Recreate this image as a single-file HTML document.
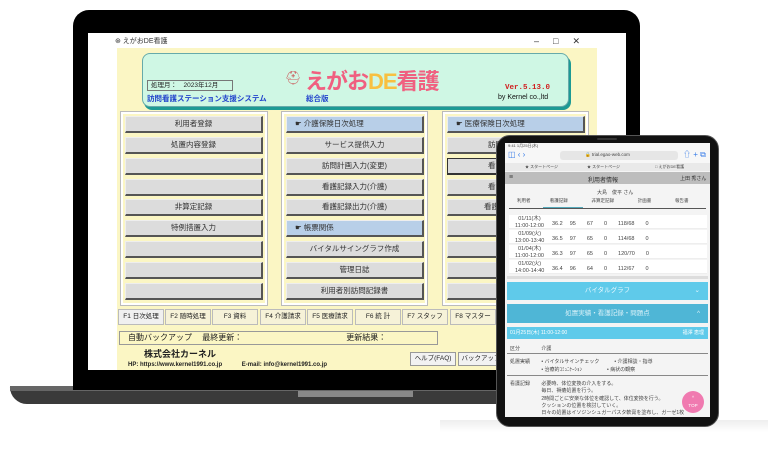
<!DOCTYPE html>
<html><head><meta charset="utf-8"><style>
*{margin:0;padding:0;box-sizing:border-box}
body{width:768px;height:458px;background:#fff;position:relative;overflow:hidden;font-family:"Liberation Sans","Noto Sans CJK JP",sans-serif;color:#222}
.a{position:absolute}
.btn{position:absolute;height:17px;background:#dcdcdc;border:1px solid #eee;border-right:2px solid #555;border-bottom:2px solid #555;font-size:7.5px;text-align:center;line-height:14px;color:#333;white-space:nowrap;overflow:hidden}
.hb{background:#b8cfe8;text-align:left;padding-left:8px}
.panel{position:absolute;top:112px;height:193px;border:2px solid #fff;outline:1px solid #bbb;background:#fbf6c4}
.tab{position:absolute;top:309px;height:16px;width:46px;background:#f6f2d8;border:1px solid #bbb;font-size:6.5px;text-align:center;line-height:14px}
.t{font-size:5.5px;color:#444;position:absolute;white-space:nowrap}
.row{position:absolute;left:509px;width:198px;height:14px;background:#fff;border-bottom:1px solid #eee}
</style></head><body>
<!-- laptop base -->
<div class="a" style="left:10px;top:386px;width:640px;height:18px;background:#3a3a3a;border-radius:2px 2px 8px 30px"></div>
<div class="a" style="left:10px;top:386px;width:640px;height:5px;background:#666"></div>
<div class="a" style="left:298px;top:391px;width:115px;height:6px;background:#888"></div>
<!-- bezel -->
<div class="a" style="left:73px;top:10px;width:567px;height:380px;background:#000;border-radius:16px 16px 0 0"></div>
<div class="a" style="left:88px;top:33px;width:538px;height:337px;background:#fff"></div>
<div class="a" style="left:115px;top:36px;font-size:7px;color:#333">⊛ えがおDE看護</div>
<div class="a" style="left:534px;top:36px;font-size:9px;color:#333;letter-spacing:14px">–□✕</div>
<div class="a" style="left:117px;top:48px;width:480px;height:322px;background:#fbf6c4"></div>
<!-- banner -->
<div class="a" style="left:142px;top:53px;width:427px;height:54px;background:#cff7e4;border-radius:8px;border:1px solid #6aa;box-shadow:2px 3px 0 #1d9a94"></div>
<div class="a" style="left:147px;top:80px;width:86px;height:11px;border:1px solid #777;font-size:6.5px;line-height:9px;padding-left:3px">処理月：　2023年12月</div>
<div class="a" style="left:147px;top:93px;font-size:7.5px;font-weight:bold;color:#2244cc">訪問看護ステーション支援システム</div>
<div class="a" style="left:306px;top:93px;font-size:7.5px;font-weight:bold;color:#2244cc">総合版</div>
<div class="a" style="left:285px;top:70px;font-size:13px;color:#c66">⛑</div>
<div class="a" style="left:305px;top:64px;font-size:22px;font-weight:bold;color:#f06080;letter-spacing:-1px">えがお<span style="color:#f8c040">DE</span>看護</div>
<div class="a" style="left:505px;top:84px;font-size:7.5px;font-weight:bold;color:#d02020;font-family:'Liberation Mono',monospace">Ver.5.13.0</div>
<div class="a" style="left:498px;top:94px;font-size:7px;color:#111">by Kernel co.,ltd</div>
<!-- panels -->
<div class="panel" style="left:121px;width:146px"></div>
<div class="panel" style="left:282px;width:145px"></div>
<div class="panel" style="left:443px;width:145px"></div>
<div class="btn" style="left:125px;top:116px;width:138px">利用者登録</div>
<div class="btn" style="left:125px;top:137px;width:138px">処置内容登録</div>
<div class="btn" style="left:125px;top:158px;width:138px"></div>
<div class="btn" style="left:125px;top:179px;width:138px"></div>
<div class="btn" style="left:125px;top:199px;width:138px">非算定記録</div>
<div class="btn" style="left:125px;top:220px;width:138px">特例措置入力</div>
<div class="btn" style="left:125px;top:241px;width:138px"></div>
<div class="btn" style="left:125px;top:262px;width:138px"></div>
<div class="btn" style="left:125px;top:283px;width:138px"></div>
<div class="btn hb" style="left:286px;top:116px;width:138px">☛ 介護保険日次処理</div>
<div class="btn" style="left:286px;top:137px;width:138px">サービス提供入力</div>
<div class="btn" style="left:286px;top:158px;width:138px">訪問計画入力(変更)</div>
<div class="btn" style="left:286px;top:179px;width:138px">看護記録入力(介護)</div>
<div class="btn" style="left:286px;top:199px;width:138px">看護記録出力(介護)</div>
<div class="btn hb" style="left:286px;top:220px;width:138px">☛ 帳票関係</div>
<div class="btn" style="left:286px;top:241px;width:138px">バイタルサイングラフ作成</div>
<div class="btn" style="left:286px;top:262px;width:138px">管理日誌</div>
<div class="btn" style="left:286px;top:283px;width:138px">利用者別訪問記録書</div>
<div class="btn hb" style="left:447px;top:116px;width:138px">☛ 医療保険日次処理</div>
<div class="btn" style="left:447px;top:137px;width:138px;text-align:left;padding-left:40px">訪問</div>
<div class="btn" style="left:447px;top:158px;width:138px;text-align:left;padding-left:40px;border-color:#333">看護</div>
<div class="btn" style="left:447px;top:179px;width:138px;text-align:left;padding-left:40px">看護</div>
<div class="btn" style="left:447px;top:199px;width:138px;text-align:left;padding-left:36px">看護</div>
<div class="btn" style="left:447px;top:220px;width:138px"></div>
<div class="btn" style="left:447px;top:241px;width:138px"></div>
<div class="btn" style="left:447px;top:262px;width:138px"></div>
<div class="btn" style="left:447px;top:283px;width:138px"></div>
<!-- tabs -->
<div class="tab" style="left:118px;background:#f0f0f0">F1 日次処理</div>
<div class="tab" style="left:165px">F2 随時処理</div>
<div class="tab" style="left:212px">F3 資料</div>
<div class="tab" style="left:260px">F4 介護請求</div>
<div class="tab" style="left:307px">F5 医療請求</div>
<div class="tab" style="left:355px">F6 統 計</div>
<div class="tab" style="left:402px">F7 スタッフ</div>
<div class="tab" style="left:450px">F8 マスター</div>
<div class="a" style="left:119px;top:331px;width:319px;height:14px;border:1px solid #999;font-size:8px;line-height:12px;padding-left:8px;white-space:pre">自動バックアップ　 最終更新：　　　　　　　　　　　　　更新結果：</div>
<div class="a" style="left:144px;top:347px;font-size:9px;font-weight:bold">株式会社カーネル</div>
<div class="a" style="left:128px;top:359px;font-size:6px;font-weight:bold;white-space:pre">HP: https://www.kernel1991.co.jp　　　 E-mail: info@kernel1991.co.jp</div>
<div class="a" style="left:410px;top:352px;width:46px;height:14px;background:#f2f2f2;border:1px solid #999;font-size:6.5px;text-align:center;line-height:12px">ヘルプ(FAQ)</div>
<div class="a" style="left:458px;top:352px;width:46px;height:14px;background:#f2f2f2;border:1px solid #999;font-size:6.5px;text-align:center;line-height:12px">バックアップ</div>
<!-- tablet shadow -->
<div class="a" style="left:440px;top:420px;width:328px;height:12px;background:linear-gradient(#eee,#fff)"></div>
<!-- tablet -->
<div class="a" style="left:496px;top:135px;width:223px;height:292px;background:#111;border-radius:14px;border:1px solid #555"></div>
<div class="a" style="left:505px;top:143px;width:205px;height:274px;background:#f4f4f4;overflow:hidden">
<div class="a" style="left:0;top:0;width:205px;height:28px;background:#f7f7f7"></div>
<div class="t" style="left:3px;top:0;font-size:4px">9:41 1月25日(木)</div>
<div class="a" style="left:55px;top:8px;width:118px;height:9px;background:#e6e6e6;border-radius:3px"></div>
<div class="t" style="left:80px;top:9px;font-size:4.5px">🔒 trial.egao-web.com</div>
<div class="a" style="left:3px;top:7px;font-size:8px;color:#3a7ee8">◫ ‹ ›</div>
<div class="a" style="left:178px;top:6px;font-size:8px;color:#3a7ee8">⇧ + ⧉</div>
<div class="a" style="left:0;top:20px;width:205px;height:8px;background:#e9e9e9"></div>
<div class="t" style="left:20px;top:21px;font-size:4px">★ スタートページ</div>
<div class="t" style="left:82px;top:21px;font-size:4px">★ スタートページ</div>
<div class="t" style="left:150px;top:21px;font-size:4px">□ えがおDE看護</div>
<div class="a" style="left:0;top:29px;width:205px;height:12px;background:#bdbdbd"></div>
<div class="t" style="left:4px;top:31px;font-size:7px">≡</div>
<div class="t" style="left:83px;top:32px;font-size:6px;color:#333">利用者情報</div>
<div class="t" style="left:175px;top:32px;font-size:5px;color:#333">上田 秀さん</div>
<div class="t" style="left:92px;top:46px;font-size:5px">大島　俊平 さん</div>
<div class="t" style="left:12px;top:55px;font-size:4.5px">利用者　　　　 看護記録　　　　　 非算定記録　　　　　 計画書　　　　　 報告書</div>
<div class="a" style="left:38px;top:64px;width:40px;height:1px;background:#5ab"></div>
<div class="a" style="left:4px;top:65px;width:197px;height:1px;background:#555"></div>
</div>
<div class="row" style="top:215px"></div><div class="row" style="top:230px"></div><div class="row" style="top:245px"></div><div class="row" style="top:260px"></div>
<div class="t" style="left:515px;top:216px;line-height:7px;text-align:center">01/11(木)<br>11:00-12:00</div>
<div class="t" style="left:515px;top:231px;line-height:7px;text-align:center">01/09(火)<br>13:00-13:40</div>
<div class="t" style="left:515px;top:246px;line-height:7px;text-align:center">01/04(木)<br>11:00-12:00</div>
<div class="t" style="left:515px;top:261px;line-height:7px;text-align:center">01/02(火)<br>14:00-14:40</div>
<div class="t" style="left:552px;top:219px;word-spacing:0">36.2　 95　　67　　0　　118/68　　0</div>
<div class="t" style="left:552px;top:234px">36.5　 97　　65　　0　　114/68　　0</div>
<div class="t" style="left:552px;top:249px">36.3　 97　　65　　0　　120/70　　0</div>
<div class="t" style="left:552px;top:264px">36.4　 96　　64　　0　　112/67　　0</div>
<div class="a" style="left:507px;top:276px;width:201px;height:3px;background:#ddd"></div>
<div class="a" style="left:507px;top:282px;width:201px;height:18px;background:#5fcaea;color:#e8f8ff;font-size:6.5px;text-align:center;line-height:18px">バイタルグラフ<span style="position:absolute;right:8px">⌄</span></div>
<div class="a" style="left:507px;top:304px;width:201px;height:19px;background:#4fb6d6;color:#d8f0f8;font-size:6.5px;text-align:center;line-height:19px">処置実績・看護記録・問題点<span style="position:absolute;right:8px">^</span></div>
<div class="a" style="left:507px;top:327px;width:201px;height:12px;background:#5fcaea;color:#fff;font-size:5px;line-height:12px;padding-left:3px">01月25日(木) 11:00-12:00<span style="position:absolute;right:4px">福澤 恵理</span></div>
<div class="t" style="left:510px;top:345px;font-size:5px">区分　　　　 介護</div>
<div class="a" style="left:507px;top:353px;width:201px;height:1px;background:#888"></div>
<div class="t" style="left:510px;top:358px;font-size:5px;line-height:8px">処置実績　　 • バイタルサインチェック　　　• 介護相談・指導<br>　　　　　　 • 治療的ｺﾐｭﾆｹｰｼｮﾝ　　　　　• 病状の観察</div>
<div class="a" style="left:507px;top:375px;width:201px;height:1px;background:#888"></div>
<div class="t" style="left:510px;top:381px;font-size:5px;line-height:7.3px">看護記録　　 必要時、体位変換の介入をする。<br>　　　　　　 毎日、褥瘡処置を行う。<br>　　　　　　 2時間ごとに安楽な体位を確認して、体位変換を行う。<br>　　　　　　 クッションの位置を検討していく。<br>　　　　　　 日々の処置はイソジンシュガーパスタ軟膏を塗布し、ガーゼ1枚</div>
<div class="a" style="left:682px;top:391px;width:22px;height:22px;border-radius:50%;background:#f07ab0;color:#fff;font-size:4.5px;text-align:center;line-height:8px;padding-top:3px">^<br>TOP</div>
<div class="a" style="left:597px;top:138px;width:20px;height:2px;background:#333;border-radius:1px"></div>
</body></html>
